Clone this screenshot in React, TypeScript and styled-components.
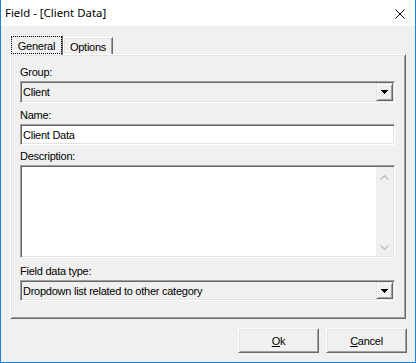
import React from "react";
import styled, { createGlobalStyle } from "styled-components";

const Global = createGlobalStyle`
  html, body { margin: 0; padding: 0; background: #f0f0f0; }
  body { width: 416px; height: 363px; overflow: hidden; }
  *, *::before, *::after { box-sizing: border-box; }
`;

const Window = styled.div`
  width: 416px;
  height: 363px;
  display: flex;
  flex-direction: column;
  border: 1px solid #1883d7;
  border-top: none;
  background: #f0f0f0;
  font-family: "Liberation Sans", Arial, sans-serif;
  font-size: 11px;
  letter-spacing: -0.25px;
  color: #000;
`;

const TitleBar = styled.div`
  height: 26px;
  flex: none;
  background: #fff;
  display: flex;
  align-items: center;
  justify-content: space-between;
  padding: 0 10px 0 4px;
`;

const Title = styled.span`
  font-family: "Noto Sans", "Segoe UI", sans-serif;
  font-size: 11.4px;
  letter-spacing: 0;
  line-height: 16px;
`;

const CloseIcon = styled.svg`
  display: block;
  width: 10px;
  height: 10px;
  margin-top: 1px;
`;

const Body = styled.div`
  flex: 1;
  display: flex;
  flex-direction: column;
  padding: 9px;
`;

const TabStrip = styled.div`
  display: flex;
  align-items: flex-end;
  height: 20px;
  margin-bottom: -1px;
  position: relative;
  z-index: 1;
`;

const Tab = styled.div<{ $selected?: boolean; $w: number }>`
  width: ${(p) => p.$w}px;
  height: ${(p) => (p.$selected ? 20 : 17)}px;
  margin-bottom: ${(p) => (p.$selected ? 0 : 1)}px;
  padding-top: ${(p) => (p.$selected ? 4 : 3)}px;
  background: #f0f0f0;
  border-top: 1px solid #fff;
  border-left: 1px solid #fff;
  border-right: 1px solid #696969;
  box-shadow: inset -1px 0 #a0a0a0, inset 1px 1px #e3e3e3;
  text-align: center;
  line-height: 13px;
  outline: ${(p) => (p.$selected ? "1px dotted #000" : "none")};
  outline-offset: -2px;
`;

const Panel = styled.div`
  height: 265px;
  flex: none;
  display: flex;
  flex-direction: column;
  padding: 11px 10px 0 9px;
  border-top: 1px solid #fff;
  border-left: 1px solid #fff;
  border-right: 1px solid #696969;
  border-bottom: 1px solid #696969;
  box-shadow: inset 1px 1px #e3e3e3, inset -1px -1px #a0a0a0;
`;

const Label = styled.div<{ $mt?: number }>`
  height: 13px;
  line-height: 13px;
  margin-top: ${(p) => p.$mt ?? 0}px;
  margin-bottom: 2px;
`;

const Sunken = styled.div<{ $bg: string; $h: number }>`
  height: ${(p) => p.$h}px;
  display: flex;
  align-items: stretch;
  padding: 1px;
  background: ${(p) => p.$bg};
  border-top: 1px solid #a0a0a0;
  border-left: 1px solid #a0a0a0;
  border-bottom: 1px solid #fff;
  border-right: 1px solid #fff;
  box-shadow: inset 1px 1px #696969, inset -1px -1px #e3e3e3;
`;

const FieldText = styled.span`
  flex: 1;
  display: flex;
  align-items: center;
  padding-left: 1px;
  white-space: nowrap;
`;

const TextArea = styled.div`
  flex: 1;
  background: #fff;
`;

const DropButton = styled.div`
  width: 17px;
  flex: none;
  display: flex;
  align-items: center;
  justify-content: center;
  background: #f0f0f0;
  border-top: 1px solid #e3e3e3;
  border-left: 1px solid #e3e3e3;
  border-right: 1px solid #696969;
  border-bottom: 1px solid #696969;
  box-shadow: inset 1px 1px #fff, inset -1px -1px #a0a0a0;
`;

const ScrollBar = styled.div`
  width: 17px;
  flex: none;
  background: #f0f0f0;
  display: flex;
  flex-direction: column;
  justify-content: space-between;
  align-items: center;
  padding: 8px 0 6px;
`;

const ButtonRow = styled.div`
  display: flex;
  justify-content: flex-end;
  gap: 7px;
  margin-top: 9px;
  margin-right: -1px;
`;

const Button = styled.div`
  width: 81px;
  height: 25px;
  display: flex;
  align-items: center;
  justify-content: center;
  background: #f0f0f0;
  border-top: 1px solid #fff;
  border-left: 1px solid #fff;
  border-right: 1px solid #696969;
  border-bottom: 1px solid #696969;
  box-shadow: inset 1px 1px #e3e3e3, inset -1px -1px #a0a0a0;
  line-height: 13px;
  padding-top: 1px;
`;

const Arrow = () => (
  <svg width="7" height="4" viewBox="0 0 7 4" style={{ display: "block" }}>
    <path d="M0 0h7v1H0zM1 1h5v1H1zM2 2h3v1H2zM3 3h1v1H3z" fill="#000" />
  </svg>
);

const Chevron = ({ up }: { up?: boolean }) => (
  <svg width="9" height="5" viewBox="0 0 9 5" style={{ display: "block" }}>
    <path
      d={up ? "M0.5 4.5L4.5 0.8L8.5 4.5" : "M0.5 0.5L4.5 4.2L8.5 0.5"}
      fill="none"
      stroke="#bfbfbf"
      strokeWidth="1.4"
    />
  </svg>
);

export default function App() {
  return (
    <>
      <Global />
      <Window>
        <TitleBar>
          <Title>Field - [Client Data]</Title>
          <CloseIcon viewBox="0 0 10 10">
            <path d="M0.5 0.5L9.5 9.5M9.5 0.5L0.5 9.5" stroke="#000" strokeWidth="1" fill="none" />
          </CloseIcon>
        </TitleBar>
        <Body>
          <TabStrip>
            <Tab $selected $w={53}>General</Tab>
            <Tab $w={50}>Options</Tab>
          </TabStrip>
          <Panel>
            <Label>Group:</Label>
            <Sunken $bg="#f0f0f0" $h={22}>
              <FieldText>Client</FieldText>
              <DropButton>
                <Arrow />
              </DropButton>
            </Sunken>
            <Label $mt={6}>Name:</Label>
            <Sunken $bg="#fff" $h={21}>
              <FieldText>Client Data</FieldText>
            </Sunken>
            <Label $mt={5}>Description:</Label>
            <Sunken $bg="#fff" $h={93}>
              <TextArea />
              <ScrollBar>
                <Chevron up />
                <Chevron />
              </ScrollBar>
            </Sunken>
            <Label $mt={7}>Field data type:</Label>
            <Sunken $bg="#f0f0f0" $h={21}>
              <FieldText>Dropdown list related to other category</FieldText>
              <DropButton>
                <Arrow />
              </DropButton>
            </Sunken>
          </Panel>
          <ButtonRow>
            <Button>
              <span>
                <u>O</u>k
              </span>
            </Button>
            <Button>
              <span>
                <u>C</u>ancel
              </span>
            </Button>
          </ButtonRow>
        </Body>
      </Window>
    </>
  );
}
